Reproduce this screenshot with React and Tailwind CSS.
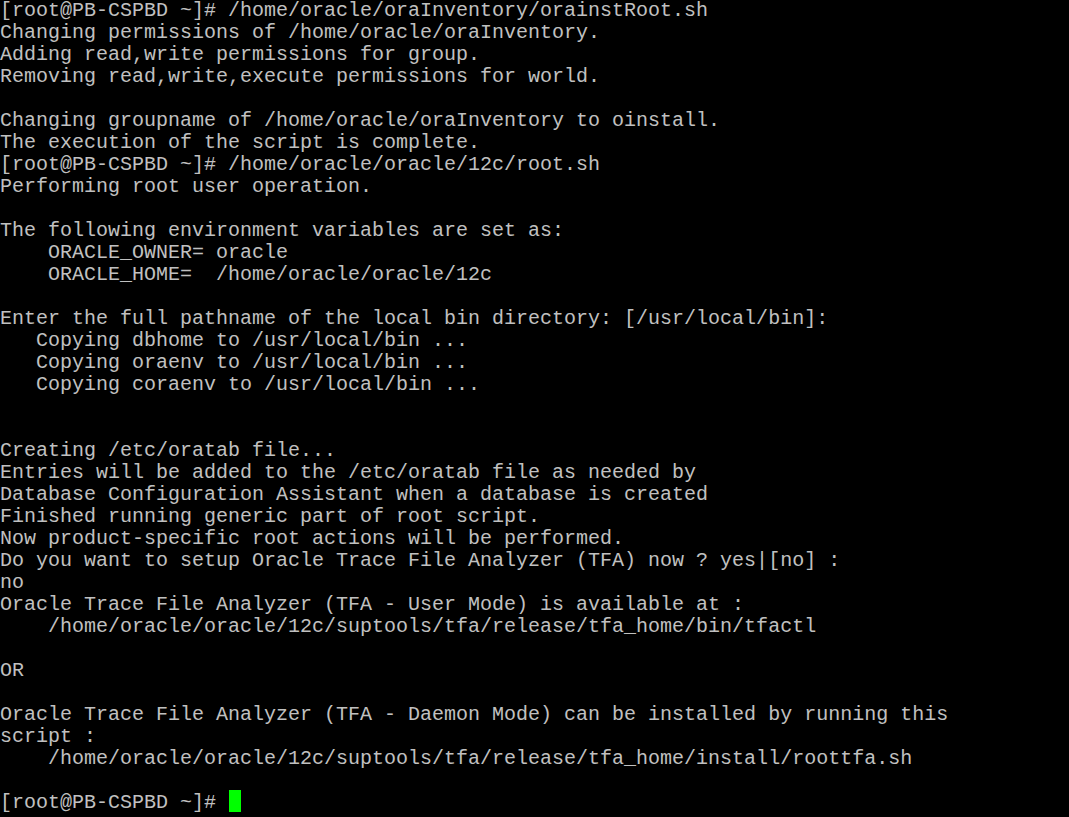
const lines = [
  "[root@PB-CSPBD ~]# /home/oracle/oraInventory/orainstRoot.sh",
  "Changing permissions of /home/oracle/oraInventory.",
  "Adding read,write permissions for group.",
  "Removing read,write,execute permissions for world.",
  "",
  "Changing groupname of /home/oracle/oraInventory to oinstall.",
  "The execution of the script is complete.",
  "[root@PB-CSPBD ~]# /home/oracle/oracle/12c/root.sh",
  "Performing root user operation.",
  "",
  "The following environment variables are set as:",
  "    ORACLE_OWNER= oracle",
  "    ORACLE_HOME=  /home/oracle/oracle/12c",
  "",
  "Enter the full pathname of the local bin directory: [/usr/local/bin]:",
  "   Copying dbhome to /usr/local/bin ...",
  "   Copying oraenv to /usr/local/bin ...",
  "   Copying coraenv to /usr/local/bin ...",
  "",
  "",
  "Creating /etc/oratab file...",
  "Entries will be added to the /etc/oratab file as needed by",
  "Database Configuration Assistant when a database is created",
  "Finished running generic part of root script.",
  "Now product-specific root actions will be performed.",
  "Do you want to setup Oracle Trace File Analyzer (TFA) now ? yes|[no] :",
  "no",
  "Oracle Trace File Analyzer (TFA - User Mode) is available at :",
  "    /home/oracle/oracle/12c/suptools/tfa/release/tfa_home/bin/tfactl",
  "",
  "OR",
  "",
  "Oracle Trace File Analyzer (TFA - Daemon Mode) can be installed by running this",
  "script :",
  "    /home/oracle/oracle/12c/suptools/tfa/release/tfa_home/install/roottfa.sh",
  "",
];

export default function App() {
  return (
    <div className="w-[1069px] h-[817px] bg-black overflow-hidden">
      <pre
        className="m-0 text-[20px] leading-[22px] text-[#c0c0c0] whitespace-pre"
        style={{ fontFamily: '"Liberation Mono", "Courier New", monospace' }}
      >
        {lines.map((l, i) => (
          <div key={i} className="h-[22px]">{l}</div>
        ))}
        <div className="h-[22px] flex">
          <span>{"[root@PB-CSPBD ~]# "}</span>
          <span className="inline-block w-[12px] h-[22px] mt-[-2px] ml-[1px] bg-[#00ff00]"></span>
        </div>
      </pre>
    </div>
  );
}
